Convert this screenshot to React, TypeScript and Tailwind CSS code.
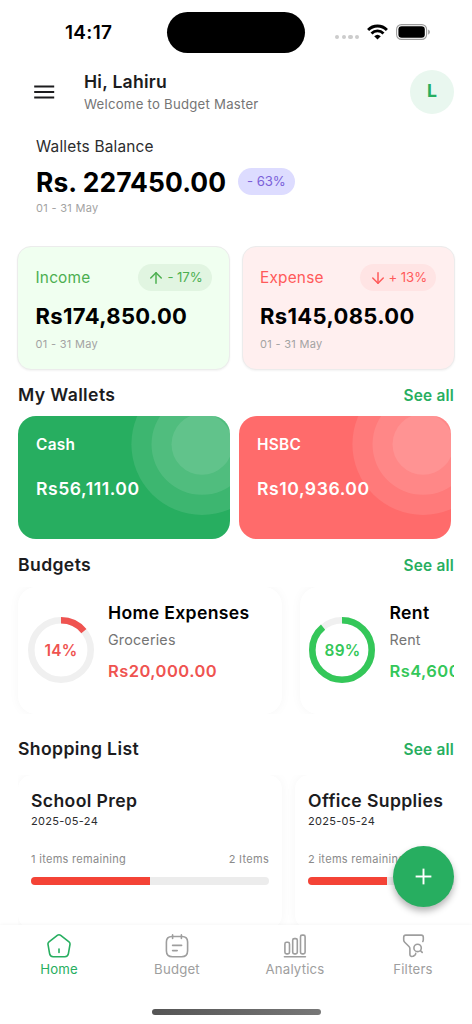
import type { ReactNode } from "react";
import { Plus, ArrowUp, ArrowDown } from "lucide-react";

/* ------------------------------------------------------------------ */
/* Data                                                                */
/* ------------------------------------------------------------------ */

const PERIOD = "01 - 31 May";

const WALLETS = [
  { name: "Cash", amount: "Rs56,111.00", bg: "bg-[#27ae60]" },
  { name: "HSBC", amount: "Rs10,936.00", bg: "bg-[#ff6b6b]" },
];

const BUDGETS = [
  { name: "Home Expenses", category: "Groceries", amount: "Rs20,000.00", percent: 14, text: "text-[#ef5350]" },
  { name: "Rent", category: "Rent", amount: "Rs4,600.00", percent: 89, text: "text-[#34c759]" },
];

const LISTS = [
  { name: "School Prep", date: "2025-05-24", remaining: 1, total: 2, done: 50 },
  { name: "Office Supplies", date: "2025-05-24", remaining: 2, total: 3, done: 33.4 },
];

/* ------------------------------------------------------------------ */
/* Status bar                                                          */
/* ------------------------------------------------------------------ */

function StatusBar() {
  return (
    <div className="flex h-[65px] shrink-0 items-center">
      <div className="w-[167px] pl-[65px] text-[19px] font-semibold leading-none tracking-[0.3px] text-black">14:17</div>
      <div className="h-[41px] w-[138px] rounded-full bg-black" />
      <div className="flex flex-1 items-center pl-[30px]">
        <div className="mt-[9px] flex gap-[2.4px]">
          {[0, 1, 2, 3].map((i) => (
            <span key={i} className="size-[4.3px] rounded-full bg-[#cccccc]" />
          ))}
        </div>
        <svg className="ml-[8px] -mt-[2px]" width="21" height="16" viewBox="0 0 21 16" fill="none">
          <path d="M1.1 5.9a13.2 13.2 0 0 1 18.8 0" stroke="#000" strokeWidth="2.9" />
          <path d="M4.5 9.4a8.5 8.5 0 0 1 12 0" stroke="#000" strokeWidth="2.8" />
          <path d="M10.5 15.6 7.2 12.3a4.8 4.8 0 0 1 6.6 0z" fill="#000" />
        </svg>
        <svg className="ml-[8px] -mt-[1px]" width="35" height="16" viewBox="0 0 35 16" fill="none">
          <rect x="0.6" y="0.6" width="30" height="14.8" rx="4.8" stroke="#9c9c9c" strokeWidth="1.1" />
          <rect x="2.4" y="2.3" width="26.4" height="11.4" rx="3.3" fill="#000" />
          <path d="M32.2 5.4v5.2c1-.4 1.7-1.4 1.7-2.6s-.7-2.2-1.7-2.6z" fill="#9c9c9c" />
        </svg>
      </div>
    </div>
  );
}

/* ------------------------------------------------------------------ */
/* Sections                                                            */
/* ------------------------------------------------------------------ */

function Header() {
  return (
    <div className="flex h-[53px] shrink-0 items-center pl-[31px] pr-[18px]">
      <svg width="26" height="26" viewBox="0 0 26 26" className="text-[#1c1c1e]">
        <path d="M3.2 7.5h20M3.2 13h20M3.2 18.500h20" stroke="currentColor" strokeWidth="2" />
      </svg>
      <div className="ml-[27px] mt-[2px] flex-1">
        <div className="text-[17.6px] font-semibold leading-[22px] tracking-[0.25px] text-[#1c1c1e]">Hi, Lahiru</div>
        <div className="text-[13.2px] leading-[22px] tracking-[0.24px] text-[#757575]">Welcome to Budget Master</div>
      </div>
      <div className="flex size-[44px] items-center justify-center rounded-full bg-[#e9f7ef] text-[17.6px] font-bold text-[#27ae60]">
        L
      </div>
    </div>
  );
}

function Balance() {
  return (
    <div className="h-[128px] shrink-0 pl-[36px] pt-[18px]">
      <div className="text-[15.4px] leading-[22px] tracking-[0.2px] text-[#2c2c2e]">Wallets Balance</div>
      <div className="mt-[10px] flex h-[27px] items-center gap-[12px]">
        <span className="text-[26.4px] font-bold leading-[28px] tracking-[0.1px] text-black">Rs. 227450.00</span>
        <span className="flex h-[27px] items-center rounded-full bg-[#dddcff] px-[9px] text-[13.2px] tracking-[-0.1px] text-[#7b61d9]">
          - 63%
        </span>
      </div>
      <div className="mt-[5px] text-[11px] leading-[16px] tracking-[0.3px] text-[#a3a3a3]">{PERIOD}</div>
    </div>
  );
}

type SummaryProps = {
  label: string;
  amount: string;
  change: string;
  icon: ReactNode;
  card: string;
  pill: string;
  text: string;
};

function SummaryCard({ label, amount, change, icon, card, pill, text }: SummaryProps) {
  return (
    <div className={`h-[124px] w-[213px] rounded-[14px] border border-[#ececec] px-[17.5px] pt-[17px] shadow-[0_1px_2px_rgba(0,0,0,0.05)] ${card}`}>
      <div className="flex h-[27px] items-center justify-between">
        <span className={`text-[15.4px] tracking-[0.2px] ${text}`}>{label}</span>
        <span className={`flex h-[27px] items-center rounded-full px-[9px] text-[13.2px] tracking-[-0.1px] ${pill} ${text}`}>
          {icon}
          <span className="ml-[2px]">{change}</span>
        </span>
      </div>
      <div className="mt-[12px] text-[22px] font-bold leading-[26px] tracking-[0.35px] text-black">{amount}</div>
      <div className="mt-[7px] text-[11px] leading-[16px] tracking-[0.3px] text-[#a3a3a3]">{PERIOD}</div>
    </div>
  );
}

function SectionTitle({ title, className }: { title: string; className: string }) {
  return (
    <div className={`flex shrink-0 items-center justify-between px-[18px] ${className}`}>
      <h2 className="text-[17.6px] font-semibold tracking-[0.38px] text-[#1c1c1e]">{title}</h2>
      <span className="text-[15.4px] font-semibold tracking-[0.2px] text-[#27ae60]">See all</span>
    </div>
  );
}

function WalletCard({ name, amount, bg }: (typeof WALLETS)[number]) {
  return (
    <div className={`relative h-[123px] w-[212px] shrink-0 overflow-hidden rounded-[18px] px-[18px] pt-[18px] text-white ${bg}`}>
      <svg className="absolute inset-0" width="212" height="123" viewBox="0 0 212 123">
        <circle cx="184" cy="28.3" r="70.6" fill="#fff" fillOpacity="0.1" />
        <circle cx="184" cy="28.3" r="50.5" fill="#fff" fillOpacity="0.1" />
        <circle cx="184" cy="28.3" r="30.5" fill="#fff" fillOpacity="0.1" />
      </svg>
      <div className="relative text-[15.4px] font-semibold leading-[22px] tracking-[0.3px]">{name}</div>
      <div className="relative mt-[22px] text-[17.6px] font-semibold leading-[22px] tracking-[0.55px]">{amount}</div>
    </div>
  );
}

function Ring({ percent }: { percent: number }) {
  return (
    <svg width="66" height="66" viewBox="0 0 66 66" fill="none" className="absolute inset-0 -rotate-90">
      <circle cx="33" cy="33" r="29.7" stroke="#f0f0f0" strokeWidth="6.6" />
      <circle cx="33" cy="33" r="29.7" stroke="currentColor" strokeWidth="6.6" pathLength={100} strokeDasharray={`${percent} 100`} />
    </svg>
  );
}

function BudgetCard({ name, category, amount, percent, text }: (typeof BUDGETS)[number]) {
  return (
    <div className="flex h-[127px] w-[264px] shrink-0 rounded-[18px] bg-white pl-[9.5px] shadow-[0_0_11px_rgba(0,0,0,0.04)]">
      <div className={`relative mt-[30px] flex size-[66px] shrink-0 items-center justify-center text-[15.4px] font-semibold tracking-[0.2px] ${text}`}>
        <Ring percent={percent} />
        <span className="pl-[1px] pt-[1px]">{percent}%</span>
      </div>
      <div className="ml-[14.5px] whitespace-nowrap pt-[15px]">
        <div className="text-[17.6px] font-semibold leading-[22px] tracking-[0.35px] text-black">{name}</div>
        <div className="mt-[5px] text-[14.3px] leading-[22px] tracking-[0.2px] text-[#757575]">{category}</div>
        <div className={`mt-[9px] text-[16.5px] font-semibold leading-[22px] tracking-[0.45px] ${text}`}>{amount}</div>
      </div>
    </div>
  );
}

function ListCard({ name, date, remaining, total, done }: (typeof LISTS)[number]) {
  return (
    <div className="h-[154px] w-[264px] shrink-0 rounded-[14px] bg-white px-[13px] pt-[15px] shadow-[0_0_11px_rgba(0,0,0,0.04)]">
      <div className="text-[17.6px] font-semibold leading-[22px] tracking-[0.38px] text-[#1c1c1e]">{name}</div>
      <div className="mt-[1px] text-[11px] leading-[16px] tracking-[0.3px] text-[#2c2c2e]">{date}</div>
      <div className="mt-[22px] flex justify-between text-[11px] leading-[16px] tracking-[0.3px] text-[#8a8a8a]">
        <span>{remaining} items remaining</span>
        <span>{total} Items</span>
      </div>
      <div className="mt-[10px] h-[8px] overflow-hidden rounded-full bg-[#ececec]">
        <div className="h-full bg-[#f44336]" style={{ width: `${done}%` }} />
      </div>
    </div>
  );
}

/* ------------------------------------------------------------------ */
/* Bottom navigation                                                   */
/* ------------------------------------------------------------------ */

function NavIcon({ children }: { children: ReactNode }) {
  return (
    <svg
      width="26"
      height="26"
      viewBox="0 0 26 26"
      fill="none"
      stroke="currentColor"
      strokeWidth="1.6"
      strokeLinecap="round"
      strokeLinejoin="round"
    >
      {children}
    </svg>
  );
}

const NAV = [
  {
    label: "Home",
    color: "text-[#27ae60]",
    icon: (
      <>
        <path d="M11.3 2.4 3 8.9a2.6 2.6 0 0 0-1 2.4l1.6 9.4a3.6 3.6 0 0 0 3.5 3h11.8a3.6 3.6 0 0 0 3.5-3l1.6-9.4a2.6 2.6 0 0 0-1-2.4l-8.3-6.5a2.7 2.7 0 0 0-3.4 0z" />
        <path d="M13 19.4v-3.3" />
      </>
    ),
  },
  {
    label: "Budget",
    color: "text-[#9e9e9e]",
    icon: (
      <>
        <path d="M8.6 1.9v3.6M17.4 1.9v3.6M8.6 12.4h9M8.6 17.6h4.6" />
        <path d="M8 3.5h10c3.6 0 5.6 2 5.6 5.6v8.6c0 4-2 6-6 6H8.4c-4 0-6-2-6-6V9.1c0-3.6 2-5.6 5.6-5.6z" />
      </>
    ),
  },
  {
    label: "Analytics",
    color: "text-[#9e9e9e]",
    icon: (
      <>
        <path d="M2.4 23.7h21" />
        <rect x="2.9" y="9.3" width="4.6" height="11.6" rx="1.6" />
        <rect x="10.7" y="5.6" width="4.6" height="15.3" rx="1.6" />
        <rect x="18.5" y="2.1" width="4.6" height="18.8" rx="1.6" />
      </>
    ),
  },
  {
    label: "Filters",
    color: "text-[#9e9e9e]",
    icon: (
      <>
        <path d="M15.7 20.4c0 .7-.5 1.5-1 1.9l-1.500.9c-1.4.9-3.3-.1-3.3-1.8v-5.7c0-.7-.4-1.7-.9-2.2L4.700 9.2c-.6-.6-1-1.5-1-2.1V4.200c0-1.200.9-2.100 2.100-2.100h15.400c1.200 0 2.100.9 2.100 2.100v2.600c0 .7-.2 1.200-.5 1.700" />
        <circle cx="17.6" cy="14.9" r="3.7" />
        <path d="M22.2 19.4l-1.500-1.500" />
      </>
    ),
  },
];

function BottomNav() {
  return (
    <nav className="absolute inset-x-0 bottom-0 h-[99px] bg-white shadow-[0_-1px_3px_rgba(0,0,0,0.03)]">
      <div className="grid grid-cols-4 pt-[8px]">
        {NAV.map((item) => (
          <div key={item.label} className={`flex flex-col items-center ${item.color}`}>
            <NavIcon>{item.icon}</NavIcon>
            <span className="mt-[1px] text-[13.2px] leading-[18px] tracking-[0.2px]">{item.label}</span>
          </div>
        ))}
      </div>
      <div className="mx-auto mt-[31px] h-[6px] w-[169px] rounded-full bg-gradient-to-r from-[#555555] to-[#777777]" />
    </nav>
  );
}

export default function App() {
  return (
    <div className="relative flex h-[1024px] w-[472px] flex-col overflow-hidden bg-white font-['Inter',sans-serif]">
      <StatusBar />
      <Header />
      <Balance />

      <div className="flex h-[123px] shrink-0 justify-between pl-[17px] pr-[17.5px]">
        <SummaryCard
          label="Income"
          amount="Rs174,850.00"
          change="- 17%"
          icon={<ArrowUp size={18} strokeWidth={2} />}
          card="bg-[#f0fff0]"
          pill="bg-[#e1f5e1]"
          text="text-[#4caf50]"
        />
        <SummaryCard
          label="Expense"
          amount="Rs145,085.00"
          change="+ 13%"
          icon={<ArrowDown size={18} strokeWidth={2} />}
          card="bg-[#ffefef]"
          pill="bg-[#ffe4e4]"
          text="text-[#ff5a5a]"
        />
      </div>

      <SectionTitle title="My Wallets" className="h-[47px] pt-[6px]" />
      <div className="flex shrink-0 gap-[9px] pl-[18px]">
        {WALLETS.map((w) => (
          <WalletCard key={w.name} {...w} />
        ))}
      </div>

      <SectionTitle title="Budgets" className="h-[48px] pt-[5px]" />
      <div className="mr-[18px] flex h-[127px] shrink-0 gap-[17.5px] overflow-hidden pl-[18px]">
        {BUDGETS.map((b) => (
          <BudgetCard key={b.name} {...b} />
        ))}
      </div>

      <SectionTitle title="Shopping List" className="h-[61px] pt-[10px]" />
      <div className="mx-[18px] flex shrink-0 gap-[13px] overflow-hidden">
        {LISTS.map((l) => (
          <ListCard key={l.name} {...l} />
        ))}
      </div>

      <button className="absolute bottom-[117px] right-[18px] flex size-[61px] items-center justify-center rounded-full bg-[#27ae60] text-white shadow-[0_4px_7px_rgba(0,0,0,0.3)]">
        <Plus size={27} strokeWidth={1.7} strokeLinecap="butt" />
      </button>
      <BottomNav />
    </div>
  );
}
